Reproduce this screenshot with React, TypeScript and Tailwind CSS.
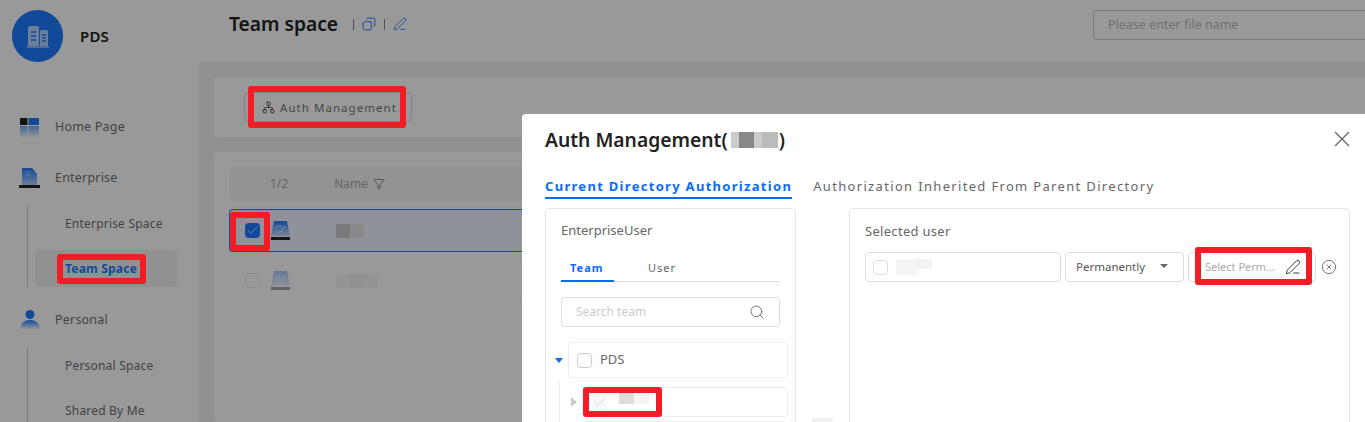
import { Search, X, PenLine, CircleX, Network, Copy, Funnel, Check } from 'lucide-react';

const blue = 'text-[#0a6cff]';

function Logo() {
  return (
    <div className="flex h-[52px] w-[51px] shrink-0 items-center justify-center rounded-full bg-[#1e7bff]">
      <svg width="22" height="23" viewBox="0 0 22 23" fill="none">
        <path d="M1 21V3q0-2 2-2h7q2 0 2 2v18z" fill="#b5d2ff" />
        <path d="M13 21V7q0-2 2-2h4q2 0 2 2v14z" fill="#b5d2ff" />
        <path d="M4 7h5M4 11h5M4 15h5M15 10h4M15 13h4M15 16h4" stroke="#1e7bff" strokeWidth="1.4" />
        <path d="M0 22h22" stroke="#b5d2ff" strokeWidth="1.4" />
      </svg>
    </div>
  );
}

function HomeIcon() {
  return (
    <svg width="19" height="19" viewBox="0 0 19 19">
      <defs>
        <linearGradient id="homeFade" x1="0" y1="0" x2="0" y2="1">
          <stop offset="0" stopColor="#1e7bff" stopOpacity="0.65" />
          <stop offset="1" stopColor="#1e7bff" stopOpacity="0.05" />
        </linearGradient>
      </defs>
      <rect x="0" y="0" width="7.5" height="7" fill="#222" />
      <rect x="8.5" y="0" width="10.5" height="7" fill="#1e7bff" />
      <rect x="0" y="8" width="7.5" height="11" fill="url(#homeFade)" />
      <rect x="8.5" y="8" width="10.5" height="11" fill="url(#homeFade)" />
    </svg>
  );
}

function EnterpriseIcon() {
  return (
    <svg width="21" height="20" viewBox="0 0 21 20">
      <defs>
        <linearGradient id="entFade" x1="0" y1="0" x2="0" y2="1">
          <stop offset="0" stopColor="#1e7bff" />
          <stop offset="1" stopColor="#1e7bff" stopOpacity="0.35" />
        </linearGradient>
      </defs>
      <path d="M3 0h10l5 6v11H3z" fill="url(#entFade)" />
      <path d="M6 4h6M6 7h6" stroke="#a9cbff" strokeWidth="1" />
      <rect x="0" y="17" width="21" height="3" fill="#222" />
    </svg>
  );
}

function PersonIcon() {
  return (
    <svg width="20" height="20" viewBox="0 0 20 20">
      <defs>
        <linearGradient id="userFade" x1="0" y1="0" x2="0" y2="1">
          <stop offset="0" stopColor="#1e7bff" />
          <stop offset="1" stopColor="#1e7bff" stopOpacity="0.05" />
        </linearGradient>
      </defs>
      <circle cx="10" cy="4.5" r="4.5" fill="#1e7bff" />
      <path d="M0 19q1-9 10-9t10 9z" fill="url(#userFade)" />
    </svg>
  );
}

function DriveIcon({ faded }: { faded?: boolean }) {
  return (
    <svg width="19" height="19" viewBox="0 0 19 19" className={faded ? 'opacity-40' : ''}>
      <defs>
        <linearGradient id="driveFade" x1="0" y1="0" x2="0" y2="1">
          <stop offset="0" stopColor="#1e7bff" />
          <stop offset="1" stopColor="#1e7bff" stopOpacity="0.2" />
        </linearGradient>
      </defs>
      <path d="M3 0h13l3 15H0z" fill="url(#driveFade)" />
      <path d="M4 8q1-3 4-3h2M5 11h5l2-5h3" stroke="#cfe2ff" strokeWidth="1" fill="none" />
      <rect x="0" y="16" width="19" height="3" fill="#222" />
    </svg>
  );
}

function Sidebar() {
  return (
    <aside className="flex w-[199px] shrink-0 flex-col bg-white text-xs tracking-[0.2px] text-[#707070]">
      <div className="flex shrink-0 items-center gap-[17px] pl-3 pt-[10px]">
        <Logo />
        <span className="text-[15px] font-semibold text-[#222]">PDS</span>
      </div>
      <div className="mt-[53px] flex h-[24px] shrink-0 items-center pl-5">
        <div className="w-[35px]"><HomeIcon /></div>
        <span className="text-[12.5px]">Home Page</span>
      </div>
      <div className="mt-[27px] flex h-[24px] shrink-0 items-center pl-[19px]">
        <div className="w-[36px]"><EnterpriseIcon /></div>
        <span className="text-[12.5px]">Enterprise</span>
      </div>
      <div className="ml-[27px] mt-[15px] h-[82px] shrink-0 border-l border-[#ccc]">
        <div className="flex h-[38px] items-center pl-[37px]">Enterprise Space</div>
        <div className="ml-[7px] mt-[7px] flex h-[37px] w-[142px] items-center rounded bg-[#f2f2f2] pl-[30px] font-bold text-[#1e7bff]">
          Team Space
        </div>
      </div>
      <div className="mt-[21px] flex h-[24px] shrink-0 items-center pl-5">
        <div className="w-[35px]"><PersonIcon /></div>
        <span className="text-[12.5px]">Personal</span>
      </div>
      <div className="ml-[27px] mt-[15px] h-[83px] shrink-0 border-l border-[#ccc] pl-[37px]">
        <div className="flex h-[38px] items-center">Personal Space</div>
        <div className="mt-[7px] flex h-[38px] items-center">Shared By Me</div>
      </div>
    </aside>
  );
}

function Background() {
  return (
    <main className="flex min-w-0 flex-1 flex-col bg-[#f0f0f0]">
      <header className="flex h-[62px] shrink-0 items-start bg-white pl-[30px] pt-[10px]">
        <h1 className="text-[19.2px] font-semibold leading-[28px] text-[#222]">Team space</h1>
        <div className="ml-[15px] mt-[9px] h-[11px] border-l border-[#888]" />
        <Copy size={14} strokeWidth={1.6} className="ml-[8px] mt-[7px] -scale-x-100 text-[#1e7bff]" />
        <div className="ml-[8px] mt-[9px] h-[11px] border-l border-[#888]" />
        <PenLine size={14} strokeWidth={1.5} className="ml-[8px] mt-[7px] text-[#1e7bff]" />
        <div className="-mr-[28px] ml-auto flex h-[30px] w-[300px] items-center rounded border border-[#ccc] pl-[14px] text-[12.5px] text-[#bbb]">
          Please enter file name
        </div>
      </header>
      <div className="ml-[15px] mt-[15px] flex h-[60px] shrink-0 items-center rounded-l bg-white pl-[30px]">
        <div className="flex h-[30px] w-[168px] items-center rounded border border-[#ddd] pl-[17px] pt-[1px] text-[11.5px] tracking-[1.05px] text-[#777]">
          <Network size={13} strokeWidth={1.4} className="mr-[5px] text-[#333]" />
          Auth Management
        </div>
      </div>
      <div className="ml-[15px] mt-[15px] flex-1 rounded-l bg-white pl-[15px] pt-[15px] text-xs text-[#aaa]">
        <div className="flex h-[34px] items-center rounded-l bg-[#f5f5f5] pl-[41px]">
          <span>1/2</span>
          <span className="ml-[46px]">Name</span>
          <Funnel size={12} strokeWidth={1.5} className="ml-[5px] text-[#666]" />
        </div>
        <div className="mt-[8px] flex h-[43px] items-center rounded-l border border-r-0 border-[#1e7bff] bg-[#eff5ff] pl-[15px]">
          <div className="flex h-[15px] w-[15px] items-center justify-center rounded-sm bg-[#1e7bff]">
            <Check size={13} strokeWidth={1.2} className="text-white" />
          </div>
          <div className="ml-[11px]"><DriveIcon /></div>
          <div className="ml-[46px] flex h-[14px]">
            <div className="w-[14px] bg-[#ccc]" />
            <div className="w-[14px] bg-[#e4e4e4]" />
          </div>
        </div>
        <div className="mt-[8px] flex h-[41px] items-center rounded-l border border-r-0 border-[#fafafa] pl-[15px]">
          <div className="h-[15px] w-[15px] rounded-sm border border-[#eee]" />
          <div className="ml-[11px]"><DriveIcon faded /></div>
          <div className="ml-[46px] flex h-[14px]">
            <div className="w-[14px] bg-[#f7f7f7]" />
            <div className="w-[14px] bg-[#f2f2f2]" />
            <div className="w-[14px] bg-[#f7f7f7]" />
          </div>
        </div>
      </div>
    </main>
  );
}

function Modal() {
  return (
    <div className="absolute bottom-0 left-[522px] right-0 top-[114px] overflow-hidden rounded-tl bg-white pl-[23px] text-[13px] text-[#666]">
      <div className="flex h-[52px] items-center">
        <span className="text-[19.3px] font-semibold text-[#222]">Auth Management(</span>
        <div className="flex h-[16px] pl-[3px]">
          <div className="w-[8px] bg-[#ccc]" />
          <div className="w-[15px] bg-[#888]" />
          <div className="w-[8px] bg-[#ccc]" />
          <div className="w-[16px] bg-[#bbb]" />
        </div>
        <span className="pl-[1px] text-[19.3px] font-semibold text-[#222]">)</span>
        <X size={26} strokeWidth={1.2} className="absolute right-[10px] top-[12px] text-[#666]" />
      </div>
      <div className="flex h-[33px] tracking-[1.3px]">
        <div className={`h-[33px] border-b-2 border-[#0a6cff] pt-[11px] font-bold ${blue}`}>Current Directory Authorization</div>
        <div className="ml-[21px] pt-[11px] tracking-[1.33px]">Authorization Inherited From Parent Directory</div>
      </div>
      <div className="mt-[9px] flex">
        <section className="h-[300px] w-[251px] shrink-0 rounded border border-[#e6e6e6] px-[15px] pt-[12px]">
          <div className="leading-[18px]">EnterpriseUser</div>
          <div className="mt-[9px] flex h-[34px] border-b border-[#ddd] text-[11px] tracking-[1px]">
            <div className={`h-[34px] w-[53px] border-b-2 border-[#0a6cff] pl-[9px] pt-[12px] font-bold ${blue}`}>Team</div>
            <div className="ml-[34px] pt-[12px]">User</div>
          </div>
          <div className="mt-[15px] flex h-[30px] w-[219px] items-center justify-between rounded border border-[#ddd] pl-[14px] pr-[14px] text-xs text-[#ccc]">
            Search team
            <Search size={16} strokeWidth={1.2} className="text-[#555]" />
          </div>
          <div className="mt-[15px] flex items-center">
            <div className="-ml-[6px] h-0 w-0 shrink-0 border-x-[4px] border-t-[5px] border-x-transparent border-t-[#0a6cff]" />
            <div className="ml-[5px] flex h-[36px] w-[220px] shrink-0 items-center rounded border border-[#eee] pl-[8px]">
              <div className="h-[15px] w-[15px] rounded-sm border border-[#ccc]" />
              <span className="ml-[8px]">PDS</span>
            </div>
          </div>
          <div className="-ml-[2px] mt-[3px] w-[230px] border-l border-[#eee] pl-[11px]">
            <div className="flex items-center pt-[6px]">
              <div className="h-0 w-0 shrink-0 border-y-[5px] border-l-[6px] border-y-transparent border-l-[#ccc]" />
              <div className="ml-[7px] flex h-[30px] w-[204px] shrink-0 items-center rounded border border-[#eee] pl-[7px]">
                <div className="flex h-[15px] w-[15px] items-center justify-center bg-[#f7f7f7]">
                  <Check size={13} strokeWidth={1} className="text-[#bbb]" />
                </div>
                <div className="mb-[8px] ml-[12px] flex h-[12px]">
                  <div className="w-[15px] bg-[#ddd]" />
                  <div className="w-[15px] bg-[#f5f5f5]" />
                </div>
              </div>
            </div>
            <div className="ml-[13px] mt-[4px] h-[30px] w-[204px] rounded border border-[#eee]" />
          </div>
        </section>
        <div className="flex w-[53px] shrink-0 items-start pl-[16px] pt-[210px]">
          <div className="h-[10px] w-[21px] bg-[#f2f2f2]" />
        </div>
        <section className="h-[300px] w-[501px] shrink-0 rounded border border-[#e6e6e6] pl-[15px] pt-[13px]">
          <div className="leading-[18px] tracking-[0.3px]">Selected user</div>
          <div className="mt-[12px] flex h-[30px] items-center text-xs">
            <div className="flex h-full w-[196px] items-center rounded border border-[#ddd] pl-[7px]">
              <div className="h-[15px] w-[15px] rounded-sm border border-[#ddd]" />
              <div className="ml-[8px] flex h-[16px] items-start">
                <div className="h-[16px] w-[22px] bg-[#f5f5f5]" />
                <div className="h-[10px] w-[14px] bg-[#f2f2f2]" />
              </div>
            </div>
            <div className="ml-[4px] flex h-full w-[119px] items-center justify-between rounded border border-[#ddd] pl-[10px] pr-[15px] text-[11.5px] text-[#555]">
              Permanently
              <div className="mb-[3px] h-0 w-0 border-x-[4px] border-t-[4px] border-x-transparent border-t-[#666]" />
            </div>
            <div className="ml-[4px] flex h-full w-[128px] items-center rounded border border-[#ddd] pl-[16px] text-[11px] text-[#aaa]">
              Select Perm...
              <PenLine size={16} strokeWidth={1.3} className="ml-[10px] text-[#222]" />
            </div>
            <CircleX size={16} strokeWidth={1.2} className="ml-[5px] text-[#555]" />
          </div>
        </section>
      </div>
    </div>
  );
}

function Highlight({ className }: { className: string }) {
  return <div className={`absolute rounded-[3px] border-[6px] border-[#f01c26] ${className}`} />;
}

export default function App() {
  return (
    <div className="relative flex h-[422px] w-[1365px] overflow-hidden font-['Noto_Sans',sans-serif]">
      <Sidebar />
      <Background />
      <div className="absolute inset-0 bg-black/40" />
      <Modal />
      <Highlight className="left-[57px] top-[254px] h-[30px] w-[89px]" />
      <Highlight className="left-[248px] top-[86px] h-[42px] w-[158px]" />
      <Highlight className="left-[230px] top-[212px] h-[39px] w-[40px]" />
      <Highlight className="left-[583px] top-[387px] h-[30px] w-[79px]" />
      <Highlight className="left-[1195px] top-[247px] h-[38px] w-[117px]" />
    </div>
  );
}
